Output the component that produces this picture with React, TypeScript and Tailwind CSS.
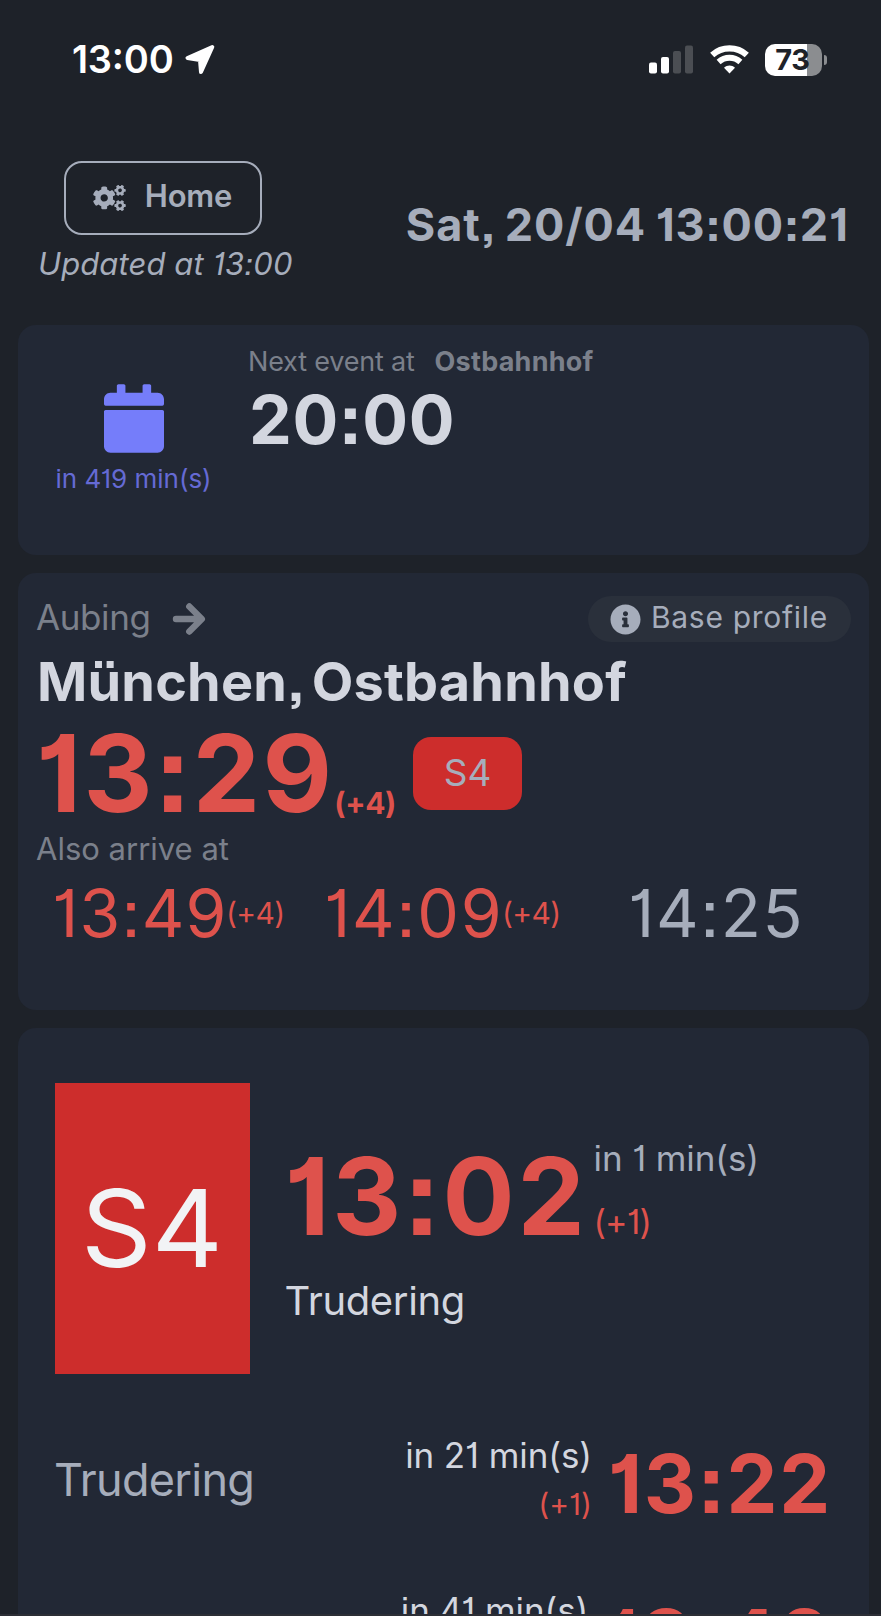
import type { ReactNode } from 'react';
import { FaCalendar, FaCogs, FaInfoCircle } from 'react-icons/fa';

function Card({ className, children }: { className: string; children: ReactNode }) {
  return <section className={`ml-[18px] mr-[12px] rounded-[18px] bg-[#222835] ${className}`}>{children}</section>;
}

function StatusBar() {
  return (
    <div className="flex h-[119px] items-center justify-between pl-[72px] pr-[54px] text-white">
      <div className="flex items-center">
        <span className="text-[38px] font-semibold tracking-[-0.200px] [font-feature-settings:'calt'_1]">13:00</span>
        <svg className="ml-[10px]" width="32" height="32" viewBox="0 0 32 32">
          <path d="M28.300 3L3.500 14 16 16 17 28z" fill="#fff" stroke="#fff" strokeWidth="4" strokeLinejoin="round" />
        </svg>
      </div>
      <div className="flex items-center">
        <svg width="45" height="29" viewBox="0 0 45 29">
          <rect x="0" y="17.500" width="8" height="11" rx="2" fill="#fff" />
          <rect x="12" y="12" width="8" height="16.500" rx="2" fill="#fff" />
          <rect x="24" y="6" width="8" height="22.500" rx="2" fill="#4b4e53" />
          <rect x="36" y="0.500" width="8" height="28" rx="2" fill="#4b4e53" />
        </svg>
        <svg className="ml-[16px]" width="39" height="29" viewBox="0 0 39 29" fill="none" stroke="#fff">
          <path d="M2.200 10C12 1.200 27 1.200 36.800 10" strokeWidth="6.200" />
          <path d="M8.600 16.900C15 11.300 24 11.300 30.400 16.900" strokeWidth="6" />
          <path d="M19.500 28.500l-5.500-5.700c3.200-3 7.800-3 11 0z" fill="#fff" stroke="none" />
        </svg>
        <div className="ml-[16px] flex h-[32px] w-[57px] items-center justify-center rounded-[10px] bg-[linear-gradient(to_right,#fff_74%,#8b8d90_74%)] pr-0.5 text-[29px] font-bold leading-none tracking-[-0.400px] text-[#1e2229]">
          73
        </div>
        <div className="ml-[2px] h-[10px] w-[3px] rounded-r-full bg-[#8b8d90]" />
      </div>
    </div>
  );
}

function Header() {
  return (
    <header className="flex h-[206px] items-start justify-between pl-[38px] pr-[32px] pt-[42px] text-[#a6adbb]">
      <div className="flex flex-col items-center">
        <button className="mr-[5px] flex h-[74px] w-[198px] items-center rounded-[18px] border-2 border-[#a6adbb] pb-1 pl-[27px]">
          <FaCogs className="mt-[4px] h-[26px] w-[33px]" />
          <span className="ml-[19px] text-[31px] font-semibold leading-9 tracking-[-0.2px]">Home</span>
        </button>
        <span className="mt-[9px] text-[31px] italic leading-10 tracking-[0.100px]">Updated at 13:00</span>
      </div>
      <div className="mt-[38px] text-[45px] font-bold leading-[52px] tracking-[0.900px] [word-spacing:-2px]">Sat, 20/04 13:00:21</div>
    </header>
  );
}

function NextEvent() {
  return (
    <Card className="flex h-[230px]">
      <div className="flex w-[193px] flex-col items-center pl-[38px] pt-[59px]">
        <FaCalendar className="h-[69px] w-[60px] text-[#757dfa]" />
        <span className="mt-[10px] whitespace-nowrap text-[26px] leading-8 text-[#656ad4]">in 419 min(s)</span>
      </div>
      <div className="pl-[37px] pt-[21px]">
        <div className="flex text-[27px] leading-8 text-[#7b808b]">
          <span className="tracking-[-0.2px]">Next event at</span>
          <span className="ml-[20px] font-bold tracking-[0.240px]">Ostbahnhof</span>
        </div>
        <div className="ml-[1px] mt-px text-[68px] font-bold leading-[80px] tracking-[0.600px] text-[#d3d6df]">20:00</div>
      </div>
    </Card>
  );
}

function Arrival() {
  return (
    <Card className="mt-[18px] h-[437px] pl-[18px] pr-[18px] pt-[23px]">
      <div className="flex items-center justify-between">
        <div className="flex items-center text-[#7b808b]">
          <span className="mb-[4px] w-[136px] text-[35px] leading-10 tracking-[-0.400px]">Aubing</span>
          <svg width="34" height="34" viewBox="0 0 34 34" fill="none" stroke="currentColor" strokeWidth="6.400" strokeLinecap="round" strokeLinejoin="round">
            <path d="M4 17h24M17.300 4.500L29.800 17 17.300 29.500" />
          </svg>
        </div>
        <div className="flex h-[46px] w-[263px] items-center rounded-full bg-[#2a303b] pl-[22px] text-[#a6adbb]">
          <FaInfoCircle className="h-[31px] w-[31px]" />
          <span className="mb-[4px] ml-[10px] text-[30px] leading-9 tracking-[0.700px]">Base profile</span>
        </div>
      </div>
      <div className="mt-[10px] pl-px text-[54px] font-bold leading-[60px] tracking-[0.200px] text-[#d3d6df] [word-spacing:-5px]">München, Ostbahnhof</div>
      <div className="flex items-center">
        <span className="mt-px text-[107px] font-bold leading-[120px] tracking-[2.300px] text-[#de524c]">13:29</span>
        <span className="mt-[61px] text-[30px] font-bold leading-9 tracking-[-0.400px] text-[#de524c]">(+4)</span>
        <div className="ml-[17px] mt-px flex h-[73px] w-[109px] items-center justify-center rounded-[18px] bg-[#cd2d2c] pb-px text-[37px] leading-none text-[#a6adbb]">
          S4
        </div>
      </div>
      <div className="-mt-[2px] text-[31px] leading-9 text-[#7b808b]">Also arrive at</div>
      <div className="mt-[6px] flex h-[80px] items-center text-[66px] leading-[80px] text-[#de524c]">
        <span className="ml-[16px] w-[174px] tracking-[1.200px]">13:49</span>
        <span className="w-[98px] text-[30px] tracking-[-0.600px]">(+4)</span>
        <span className="w-[178px] tracking-[1.800px]">14:09</span>
        <span className="w-[126px] text-[30px] tracking-[-0.600px]">(+4)</span>
        <span className="tracking-[1.600px] text-[#a6adbb]">14:25</span>
      </div>
    </Card>
  );
}

function NextTrain({ wait, time, destination }: { wait: string; time: string; destination?: string }) {
  return (
    <div className="flex h-[155px] items-start justify-between pl-[36px] pr-[37px]">
      <span className="mt-[75px] text-[45px] leading-[54px] tracking-[-0.700px] text-[#a6adbb]">{destination}</span>
      <div className="flex">
        <div className="flex flex-col items-end">
          <span className="mt-[57px] text-[35px] leading-10 tracking-[-0.100px] text-[#d3d6df]">{wait}</span>
          <span className="mt-[11px] text-[30px] leading-9 text-[#de524c]">(+1)</span>
        </div>
        <span className="ml-[16px] mt-[58px] min-w-[223px] text-[81px] font-bold leading-[96px] tracking-[1.700px] text-[#de524c]">{time}</span>
      </div>
    </div>
  );
}

function Departures() {
  return (
    <Card className="mt-[18px] h-[700px] shrink-0 pt-[55px]">
      <div className="flex pl-[36.500px]">
        <div className="flex h-[291px] w-[195px] items-center justify-center bg-[#cd2d2c] text-[107px] leading-none text-[#f2f3f5]">
          <span className="scale-x-[1.030]">S4</span>
        </div>
        <div className="pl-[35px] pt-[53px]">
          <div className="flex">
            <span className="w-[309px] text-[107px] font-bold leading-[120px] tracking-[2.700px] text-[#de524c]">13:02</span>
            <div className="flex flex-col">
              <span className="mt-[2px] text-[35px] leading-10 tracking-[-0.100px] text-[#a6adbb]">in 1 min(s)</span>
              <span className="mt-[24px] text-[34px] leading-10 tracking-[-0.800px] text-[#de524c]">(+1)</span>
            </div>
          </div>
          <div className="mt-[21px] text-[40px] leading-[48px] tracking-[-0.350px] text-[#d3d6df]">Trudering</div>
        </div>
      </div>
      <div className="mt-[4px]">
        <NextTrain destination="Trudering" wait="in 21 min(s)" time="13:22" />
        <NextTrain wait="in 41 min(s)" time="13:42" />
      </div>
    </Card>
  );
}

export default function App() {
  return (
    <main className="h-[1616px] w-[881px] overflow-hidden bg-[#1e2229] font-['Inter',sans-serif] [font-feature-settings:'ss07'_1,'cv01'_1,'calt'_0]">
      <div className="h-[1614px] overflow-hidden">
        <StatusBar />
        <Header />
        <NextEvent />
        <Arrival />
        <Departures />
      </div>
      <div className="h-[2px] bg-[#2c2e35]" />
    </main>
  );
}
